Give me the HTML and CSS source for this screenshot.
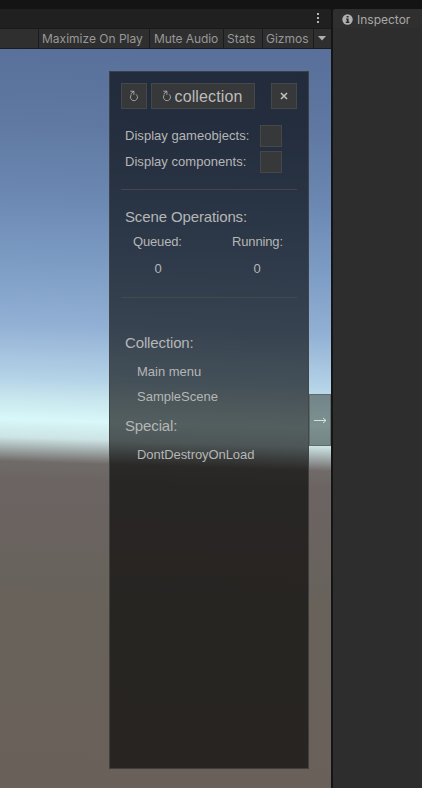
FILE: index.html
```html
<!DOCTYPE html>
<html lang="en">
<head>
<meta charset="utf-8">
<title>Game view</title>
<link rel="stylesheet" href="styles.css">
</head>
<body>
<div class="topbar"></div>
<div class="editor">
  <section class="game">
    <div class="tabs"><svg width="4" height="14" viewBox="0 0 4 14"><path d="M1 2h2v2H1zM1 6h2v2H1zM1 10h2v2H1z" fill="#b4b4b4"/></svg></div>
    <nav class="toolbar">
      <span class="tool maximize">Maximize On Play</span>
      <span class="tool mute">Mute Audio</span>
      <span class="tool stats">Stats</span>
      <span class="tool gizmos">Gizmos</span>
      <span class="tool arrow"><svg width="8" height="5" viewBox="0 0 8 5"><path d="M0 0h8L4 4.5z" fill="#b0b0b0"/></svg></span>
    </nav>
    <div class="view">
      <div class="panel">
        <div class="buttons">
          <button class="btn square"><svg class="reload" width="10" height="12" viewBox="0 0 10 12"><path d="M2.6 4.6A3.5 3.5 0 1 0 7 4.3M1.3 1.2h3.6v3.6M4.9 1.2L1.6 4"/></svg></button>
          <button class="btn wide"><svg class="reload" width="10" height="12" viewBox="0 0 10 12"><path d="M2.6 4.6A3.5 3.5 0 1 0 7 4.3M1.3 1.2h3.6v3.6M4.9 1.2L1.6 4"/></svg><span>collection</span></button>
          <button class="btn square close"><svg width="8" height="8" viewBox="0 0 8 8"><path d="M1 1l6 6M7 1L1 7" stroke="#c0c0c0" stroke-width="1.6"/></svg></button>
        </div>
        <div class="options">
          <div class="option"><span class="gameobjects">Display gameobjects:</span><i class="check"></i></div>
          <div class="option"><span class="components">Display components:</span><i class="check"></i></div>
        </div>
        <div class="operations">
          <h2>Scene Operations:</h2>
          <div class="counts">
            <div><span>Queued:</span><b>0</b></div>
            <div><span>Running:</span><b>0</b></div>
          </div>
        </div>
        <div class="scenes">
          <h2>Collection:</h2>
          <p>Main menu</p>
          <p>SampleScene</p>
          <h2 class="special">Special:</h2>
          <p class="last">DontDestroyOnLoad</p>
        </div>
      </div>
      <div class="handle"><svg width="14" height="7" viewBox="0 0 14 7"><path d="M1 3.5h12M10 1l3 2.5-3 2.5" fill="none" stroke="#d8dfde"/></svg></div>
    </div>
  </section>
  <aside class="inspector">
    <div class="inspector-tab">
      <svg width="11" height="11" viewBox="0 0 11 11"><circle cx="5.5" cy="5.5" r="5.2" fill="#b0b0b0"/><path d="M4.6 2h2v1.5h-2zM4 4.5h2.6v3.3h.8V9H3.8V7.8h.9V5.6H4z" fill="#2b2b2b"/></svg>
      <span>Inspector</span>
    </div>
    <div class="inspector-body"></div>
  </aside>
</div>
</body>
</html>
```
FILE: styles.css
```css
* { box-sizing: border-box; }
body { margin: 0; width: 422px; height: 788px; overflow: hidden; background: #141414; font-family: "Liberation Sans", Arial, sans-serif; color: #b6b6b6; }
svg { display: block; flex: none; }
.topbar { height: 9px; background: #141414; }
.editor { display: flex; gap: 2px; height: 779px; background: #151515; }
.game { width: 331px; display: flex; flex-direction: column; }
.tabs { height: 19px; background: #202020; border-radius: 0 2px 0 0; display: flex; justify-content: flex-end; padding: 2px 11px 0 0; }
.toolbar { height: 21px; background: #2f2f2f; border-top: 1px solid #1a1a1a; border-bottom: 1px solid #1c1c1c; display: flex; padding-left: 38px; font: 12px/20px Inter, sans-serif; color: #989898; }
.tool { border-left: 1px solid #1b1b1b; padding-left: 3px; white-space: nowrap; }
.maximize { width: 111px; }
.mute { width: 74px; padding-left: 4px; letter-spacing: -.07px; }
.stats { width: 39px; }
.gizmos { width: 51px; }
.arrow { width: 18px; padding: 7px 0 0 4px; }
.view { flex: 1; display: flex; align-items: flex-start; padding: 22px 0 0 109px; background: linear-gradient(181.8deg, #58709a 4px, #5f79a2 85px, #6c89b3 160px, #7c9bc3 220px, #92b0d4 285px, #b5d4e8 340px, #c5e3ec 355px, #d8f8f9 380px, #cce3e4 398px, #706b69 422px, #6b6463 439px, #68625b 560px, #696059 745px); }
.panel { width: 200px; height: 698px; border: 1px solid rgba(68,68,68,.85); background: rgba(0,0,0,.62); padding: 11px; flex: none; }
.buttons { display: flex; height: 26px; }
.btn { height: 26px; margin: 0; padding: 0; background: #37383a; border: 1px solid #45474a; color: #bcbcbc; font: 16px "Liberation Sans", sans-serif; display: flex; align-items: center; justify-content: center; }
.square { width: 26px; }
.wide { width: 104px; margin-left: 4px; gap: 3px; padding-right: 2px; letter-spacing: .12px; }
.wide span { padding-top: 2px; }
.close { margin-left: 16px; }
.reload { fill: none; stroke: #b0b0b0; stroke-width: .9; }
.options { padding: 16px 4px 0; height: 81px; border-bottom: 1px solid #43474c; font-size: 13px; }
.option { display: flex; justify-content: space-between; height: 26px; line-height: 21px; padding-right: 11px; white-space: nowrap; }
.gameobjects, .components { letter-spacing: .04px; }
.check { width: 22px; height: 22px; background: #37383a; border: 1px solid #45474a; }
h2 { font-size: 15px; font-weight: 400; line-height: 18px; letter-spacing: -.13px; margin: 0; }
.operations { height: 108px; padding: 18px 4px 0; border-bottom: 1px solid #46494b; }
.counts { display: flex; justify-content: space-between; padding: 0 10px 0 8px; font-size: 13px; line-height: 16px; letter-spacing: -.15px; margin-top: 8px; }
.counts div { width: 50px; white-space: nowrap; }
.counts div + div { margin-right: 1px; }
.counts b { display: block; font-weight: 400; margin-top: 11px; text-align: center; }
.scenes { padding: 36px 4px 0; font-size: 13px; }
p { margin: 0 0 0 12px; line-height: 25px; }
.last { letter-spacing: -.07px; }
.scenes h2 { margin-bottom: 7px; }
.scenes .special { margin-top: 8px; }
.handle { width: 22px; height: 52px; margin-top: 323px; border: 1px solid #5d6b6b; background: linear-gradient(#72858a, #7d9190 60%, #738584); display: flex; align-items: center; justify-content: center; }
.inspector { width: 89px; display: flex; flex-direction: column; }
.inspector-tab { height: 19px; background: #2f2f2f; border-radius: 2px 0 0 0; display: flex; padding: 5px 0 0 9px; gap: 4px; font: 12px/12px Inter, sans-serif; color: #a8a8a8; }
.inspector-body { flex: 1; background: #2d2d2d; }
```
